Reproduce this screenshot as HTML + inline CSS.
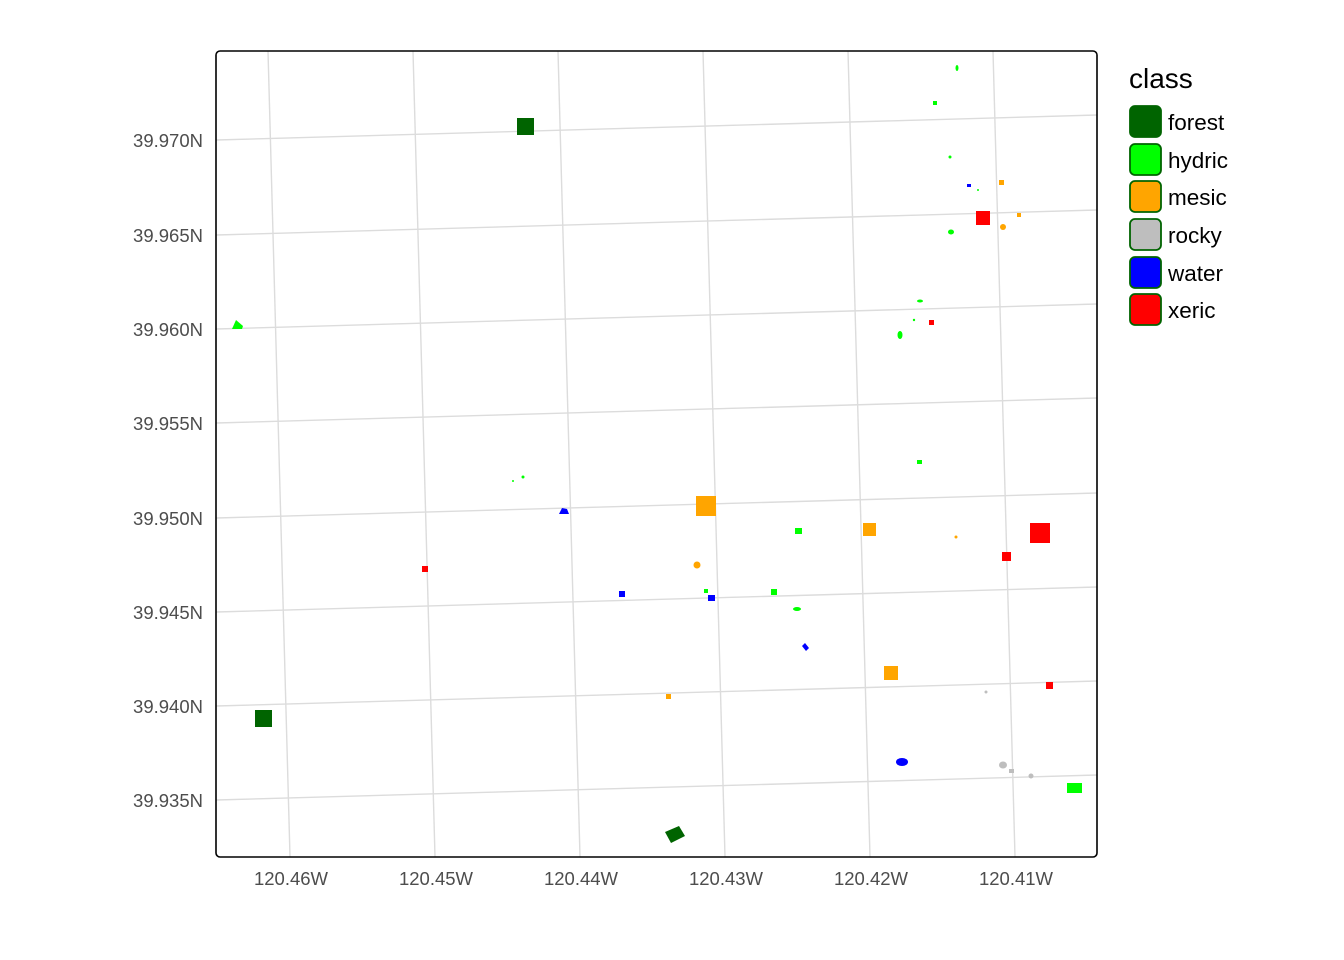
<!DOCTYPE html><html><head><style>body{margin:0;background:#fff}svg{display:block}</style></head><body>
<svg width="1344" height="960" xmlns="http://www.w3.org/2000/svg" font-family="Liberation Sans, sans-serif">
<rect width="1344" height="960" fill="#fff"/>
<g stroke="#dcdcdc" stroke-width="1.4">
<line x1="268" y1="51" x2="290" y2="857"/><line x1="413" y1="51" x2="435" y2="857"/><line x1="558" y1="51" x2="580" y2="857"/><line x1="703" y1="51" x2="725" y2="857"/><line x1="848" y1="51" x2="870" y2="857"/><line x1="993" y1="51" x2="1015" y2="857"/>
<line x1="216" y1="140" x2="1097" y2="115"/><line x1="216" y1="235" x2="1097" y2="210"/><line x1="216" y1="329" x2="1097" y2="304"/><line x1="216" y1="423" x2="1097" y2="398"/><line x1="216" y1="518" x2="1097" y2="493"/><line x1="216" y1="612" x2="1097" y2="587"/><line x1="216" y1="706" x2="1097" y2="681"/><line x1="216" y1="800" x2="1097" y2="775"/>
</g>
<g>
<rect x="517" y="118" width="17" height="17" fill="#006400"/>
<rect x="255" y="710" width="17" height="17" fill="#006400"/>
<polygon points="665,832 679,826 685,836 671,843" fill="#006400"/>
<rect x="976" y="211" width="14" height="14" fill="#f00"/>
<rect x="1030" y="523" width="20" height="20" fill="#f00"/>
<rect x="1002" y="552" width="9" height="9" fill="#f00"/>
<rect x="422" y="566" width="6" height="6" fill="#f00"/>
<rect x="929" y="320" width="5" height="5" fill="#f00"/>
<rect x="1046" y="682" width="7" height="7" fill="#f00"/>
<rect x="696" y="496" width="20" height="20" fill="#ffa500"/>
<rect x="863" y="523" width="13" height="13" fill="#ffa500"/>
<rect x="884" y="666" width="14" height="14" fill="#ffa500"/>
<rect x="666" y="694" width="5" height="5" fill="#ffa500"/>
<rect x="999" y="180" width="5" height="5" fill="#ffa500"/>
<rect x="1017" y="213" width="4" height="4" fill="#ffa500"/>
<circle cx="1003" cy="227" r="3" fill="#ffa500"/><circle cx="697" cy="565" r="3.5" fill="#ffa500"/><circle cx="956" cy="537" r="1.5" fill="#ffa500"/>
<rect x="1067" y="783" width="15" height="10" fill="#0f0"/>
<polygon points="232,329 236,320 243,326 242,329" fill="#0f0"/>
<rect x="795" y="528" width="7" height="6" fill="#0f0"/>
<rect x="771" y="589" width="6" height="6" fill="#0f0"/>
<rect x="917" y="460" width="5" height="4" fill="#0f0"/>
<rect x="704" y="589" width="4" height="4" fill="#0f0"/>
<rect x="933" y="101" width="4" height="4" fill="#0f0"/>
<ellipse cx="951" cy="232" rx="3" ry="2.5" fill="#0f0"/><ellipse cx="797" cy="609" rx="4" ry="2" fill="#0f0"/><ellipse cx="900" cy="335" rx="2.5" ry="4" fill="#0f0"/><ellipse cx="920" cy="301" rx="3" ry="1.5" fill="#0f0"/><ellipse cx="957" cy="68" rx="1.5" ry="3" fill="#0f0"/>
<circle cx="950" cy="157" r="1.5" fill="#0f0"/><circle cx="523" cy="477" r="1.5" fill="#0f0"/><circle cx="914" cy="320" r="1.2" fill="#0f0"/><circle cx="978" cy="190" r="1" fill="#0f0"/><circle cx="513" cy="481" r="1" fill="#0f0"/>
<path d="M559,514 L562,508 L567,509 L569,514 Z" fill="#00f"/>
<rect x="619" y="591" width="6" height="6" fill="#00f"/>
<rect x="708" y="595" width="7" height="6" fill="#00f"/>
<ellipse cx="902" cy="762" rx="6" ry="4" fill="#00f"/>
<polygon points="802,646 805,643 809,648 806,651" fill="#00f"/>
<rect x="967" y="184" width="4" height="3" fill="#00f"/>
<ellipse cx="1003" cy="765" rx="4" ry="3.5" fill="#bebebe"/><rect x="1009" y="769" width="5" height="4" fill="#bebebe"/><circle cx="1031" cy="776" r="2.5" fill="#bebebe"/><circle cx="986" cy="692" r="1.5" fill="#bebebe"/>
</g>
<rect x="216" y="51" width="881" height="806" rx="4" fill="none" stroke="#000" stroke-width="1.6"/>
<g font-size="18.5" fill="#4d4d4d" text-anchor="end">
<text x="203" y="147">39.970N</text><text x="203" y="242">39.965N</text><text x="203" y="336">39.960N</text><text x="203" y="430">39.955N</text><text x="203" y="525">39.950N</text><text x="203" y="619">39.945N</text><text x="203" y="713">39.940N</text><text x="203" y="807">39.935N</text>
</g>
<g font-size="18.5" fill="#4d4d4d" text-anchor="middle">
<text x="291" y="885">120.46W</text><text x="436" y="885">120.45W</text><text x="581" y="885">120.44W</text><text x="726" y="885">120.43W</text><text x="871" y="885">120.42W</text><text x="1016" y="885">120.41W</text>
</g>
<text x="1129" y="88" font-size="28" fill="#000">class</text>
<g stroke="#006400" stroke-width="1.8">
<rect x="1130" y="106" width="31" height="31" rx="5" fill="#006400"/>
<rect x="1130" y="144" width="31" height="31" rx="5" fill="#0f0"/>
<rect x="1130" y="181" width="31" height="31" rx="5" fill="#ffa500"/>
<rect x="1130" y="219" width="31" height="31" rx="5" fill="#bebebe"/>
<rect x="1130" y="257" width="31" height="31" rx="5" fill="#00f"/>
<rect x="1130" y="294" width="31" height="31" rx="5" fill="#f00"/>
</g>
<g font-size="22.5" fill="#000">
<text x="1168" y="130">forest</text><text x="1168" y="168">hydric</text><text x="1168" y="205">mesic</text><text x="1168" y="243">rocky</text><text x="1168" y="281">water</text><text x="1168" y="318">xeric</text>
</g>
</svg>
</body></html>
